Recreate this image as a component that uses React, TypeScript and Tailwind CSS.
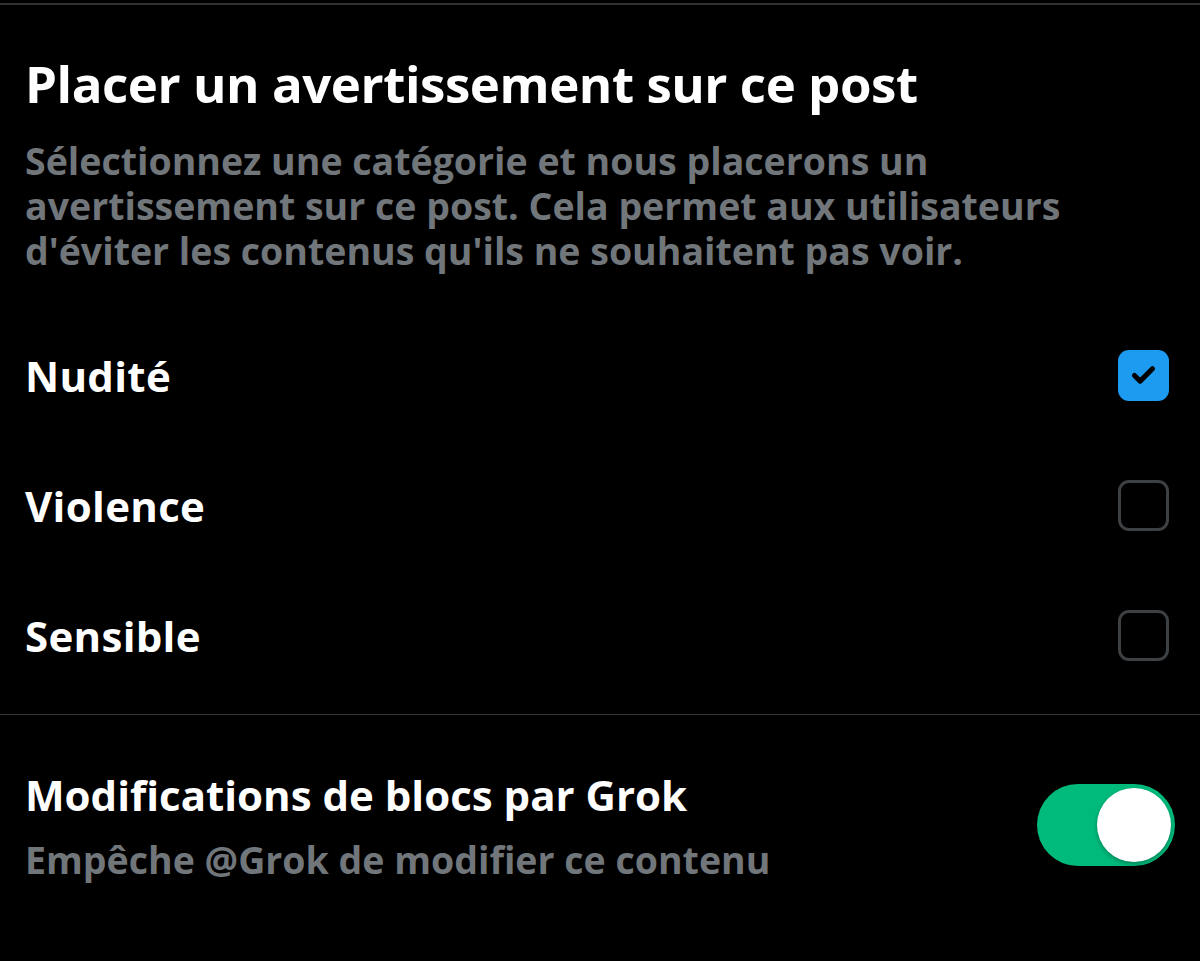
import { Check } from 'lucide-react';

const options = [
  { label: 'Nudité', checked: true },
  { label: 'Violence', checked: false },
  { label: 'Sensible', checked: false },
];

function Box({ checked }: { checked: boolean }) {
  if (checked) {
    return (
      <div className="w-[51px] h-[51px] rounded-[11px] bg-[#1d9bf0] flex items-center justify-center">
        <Check className="w-[27px] h-[27px] text-black" strokeWidth={4.5} />
      </div>
    );
  }
  return <div className="w-[51px] h-[51px] rounded-[11px] border-[3px] border-[#3e4144]" />;
}

export default function App() {
  return (
    <div className="w-[1200px] h-[961px] bg-black overflow-hidden" style={{ fontFamily: '"Open Sans", sans-serif' }}>
      <div className="h-[3px]" />
      <div className="h-[2px] bg-[#2f3336]" />

      <div className="pl-[25px] pr-[60px] pt-[48px]">
        <h1 className="text-[51px] leading-[60px] font-bold text-white tracking-[-0.45px]">
          Placer un avertissement sur ce post
        </h1>
        <p className="mt-[25px] text-[37.5px] leading-[45px] font-bold text-[#71767b]">
          Sélectionnez une catégorie et nous placerons un avertissement sur ce post. Cela permet aux utilisateurs d'éviter les contenus qu'ils ne souhaitent pas voir.
        </p>
      </div>

      <div className="mt-[37px] flex flex-col">
        {options.map((o) => (
          <div key={o.label} className="h-[130px] flex items-center justify-between pl-[25px] pr-[31px]">
            <span className="text-[42px] font-bold text-white tracking-[0.3px]">{o.label}</span>
            <Box checked={o.checked} />
          </div>
        ))}
      </div>

      <div className="mt-[14px] h-px bg-[#2f3336]" />

      <div className="flex items-center justify-between pl-[25px] pr-[25px] pt-[50px]">
        <div className="flex flex-col">
          <span className="text-[42px] leading-[60px] font-bold text-white">Modifications de blocs par Grok</span>
          <span className="mt-[10px] text-[37.5px] leading-[50px] font-bold text-[#71767b]">Empêche @Grok de modifier ce contenu</span>
        </div>
        <div className="w-[138px] h-[82px] rounded-full bg-[#00ba7c] flex items-center justify-end px-[4px]">
          <div className="w-[74px] h-[74px] rounded-full bg-white shadow-[0_2px_4px_rgba(0,0,0,0.3)]" />
        </div>
      </div>
    </div>
  );
}
